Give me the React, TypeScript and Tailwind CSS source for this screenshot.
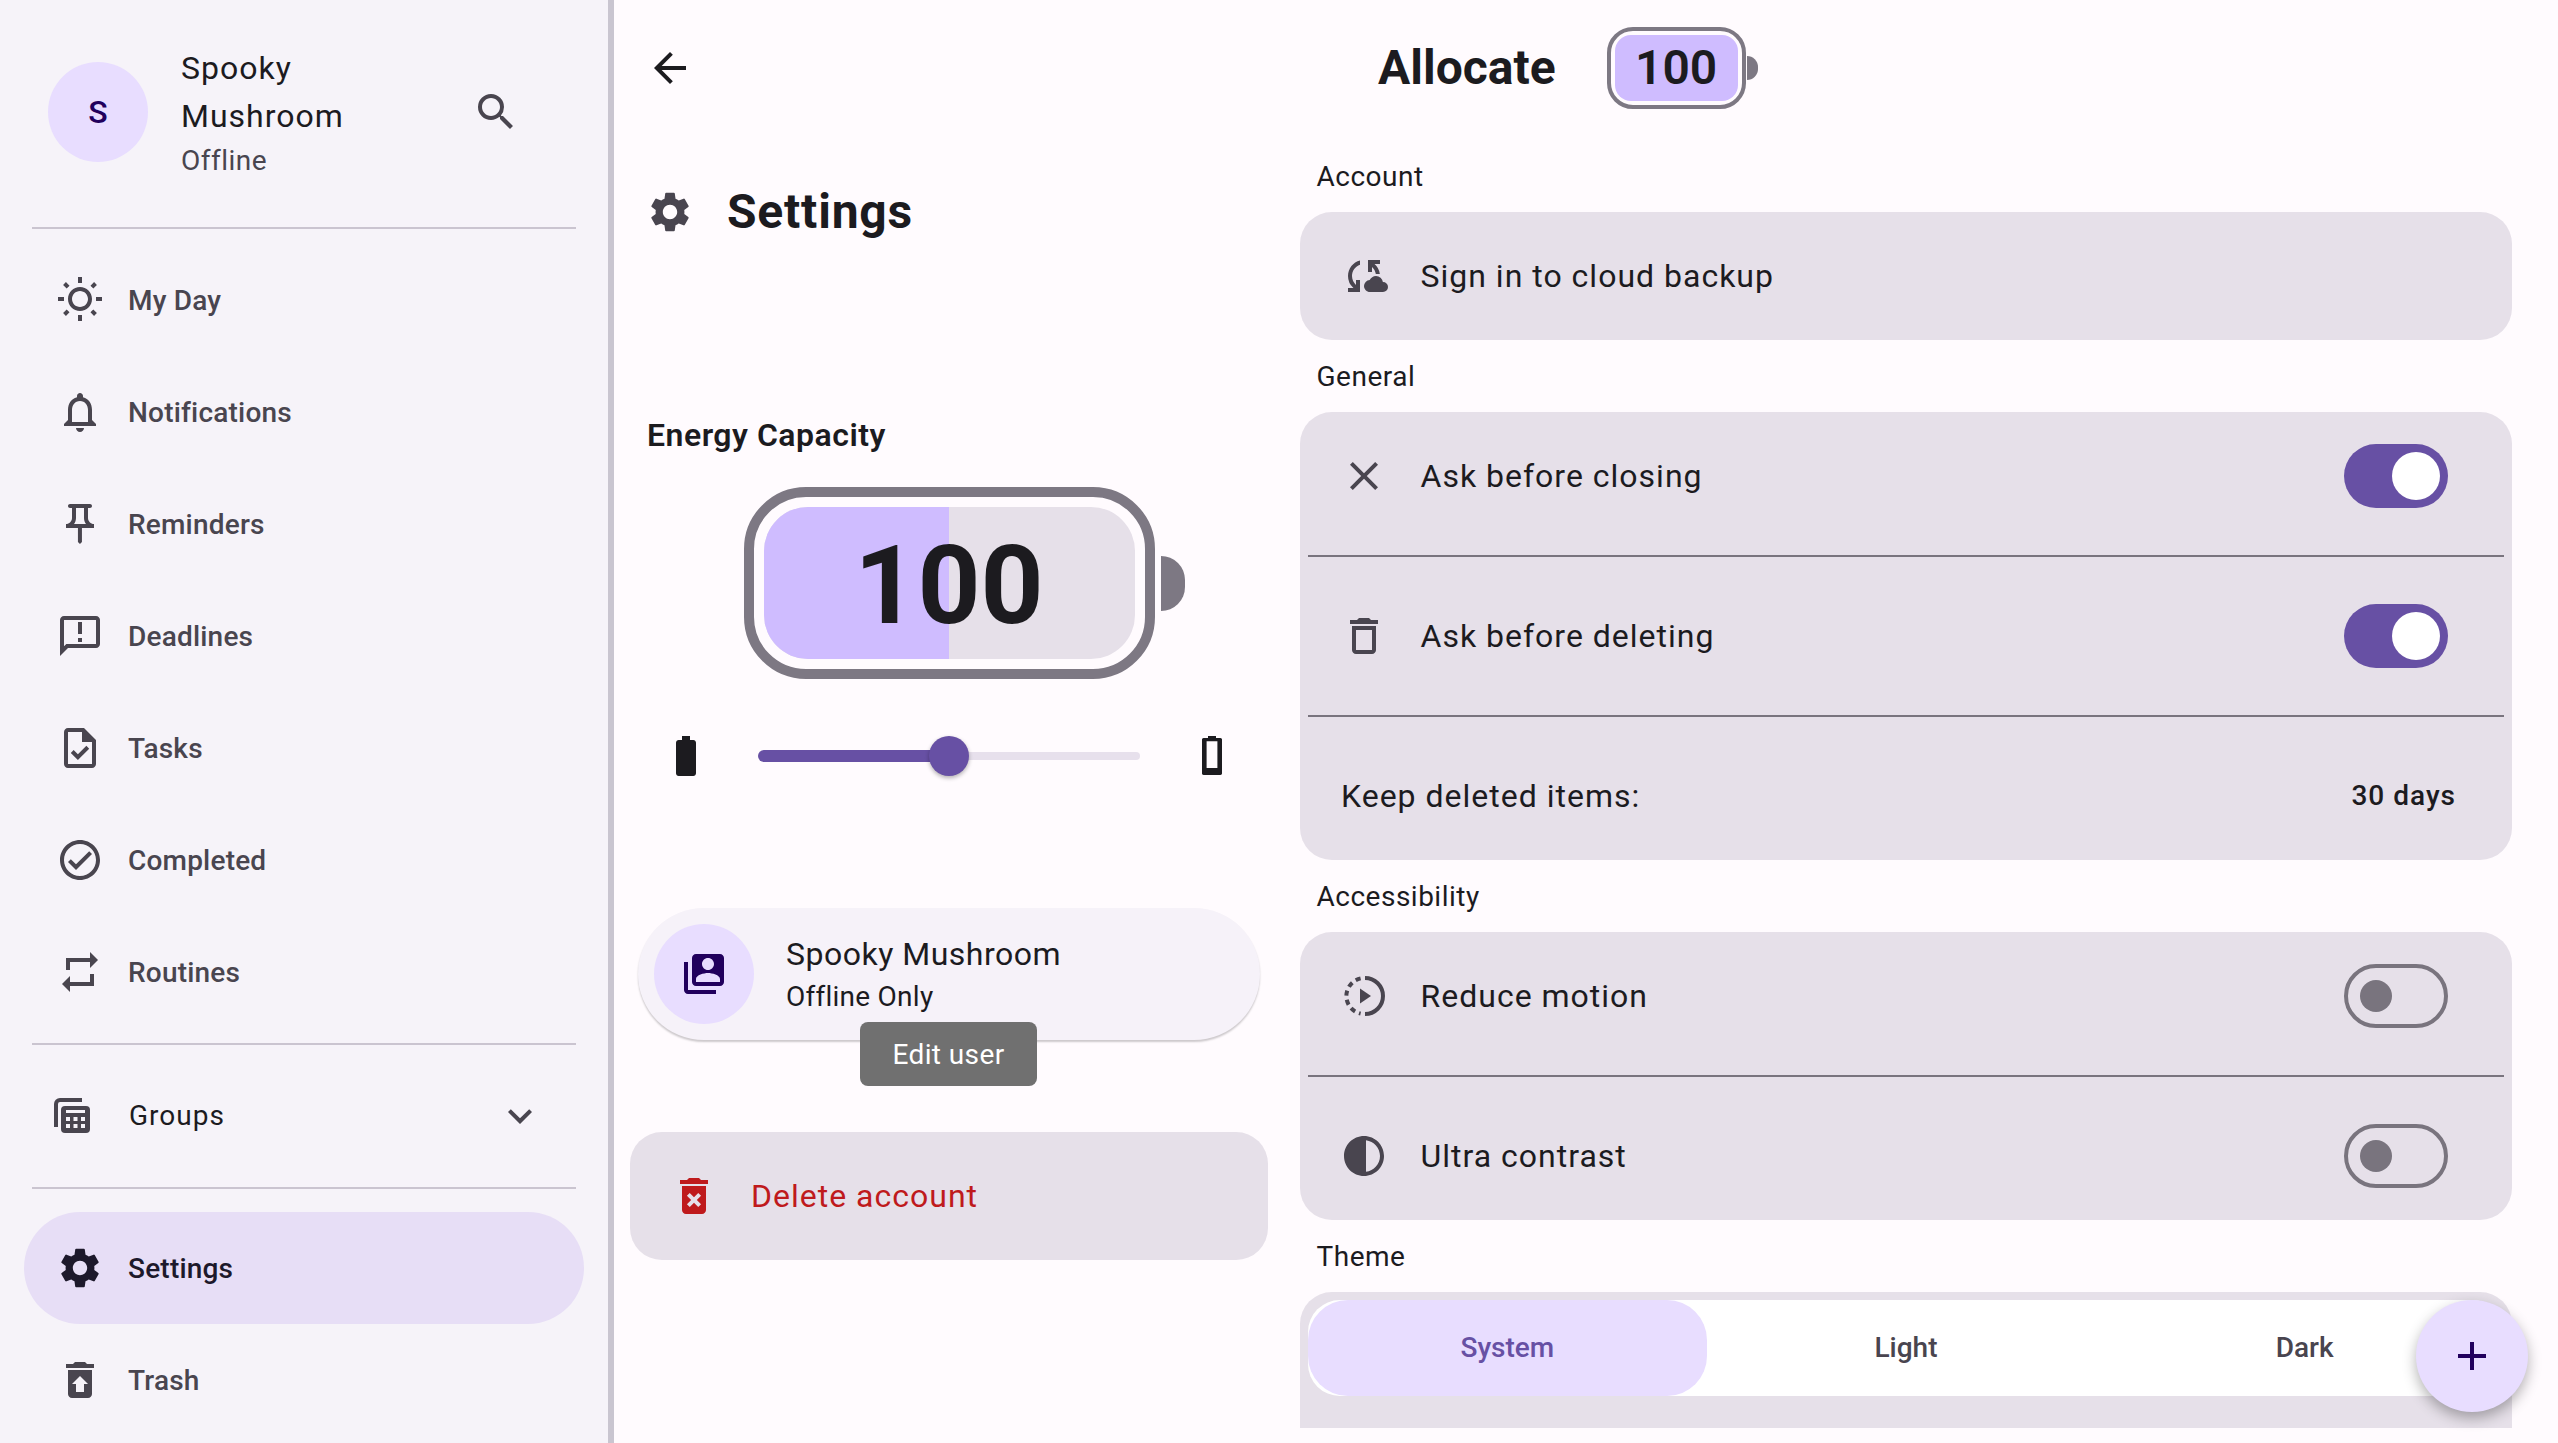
import type { ReactNode } from "react";
import {
  MdAdd,
  MdArrowBack,
  MdBatteryFull,
  MdClose,
  MdCloudSync,
  MdContrast,
  MdDeleteForever,
  MdExpandMore,
  MdOutlineAnnouncement,
  MdOutlineCheckCircle,
  MdOutlineDelete,
  MdOutlineNotifications,
  MdOutlinePushPin,
  MdOutlineTask,
  MdOutlineWbSunny,
  MdRepeat,
  MdRestoreFromTrash,
  MdSearch,
  MdSettings,
  MdSwitchAccount,
} from "react-icons/md";

const navTop = [
  { label: "My Day", icon: <MdOutlineWbSunny size={48} /> },
  { label: "Notifications", icon: <MdOutlineNotifications size={48} /> },
  { label: "Reminders", icon: <MdOutlinePushPin size={48} /> },
  { label: "Deadlines", icon: <MdOutlineAnnouncement size={48} /> },
  { label: "Tasks", icon: <MdOutlineTask size={48} /> },
  { label: "Completed", icon: <MdOutlineCheckCircle size={48} /> },
  { label: "Routines", icon: <MdRepeat size={48} /> },
];

function GroupsIcon() {
  return (
    <svg width="36" height="36" viewBox="0 0 36 36" className="shrink-0">
      <path d="M2 29V6a4 4 0 0 1 4-4h22" fill="none" stroke="#49454f" strokeWidth="4" />
      <rect x="7" y="8" width="29" height="27" rx="4" fill="#49454f" />
      <rect x="12" y="12" width="19" height="3" fill="#f6f3f9" />
      <g fill="#f6f3f9">
        <rect x="12" y="19" width="4" height="4" />
        <rect x="19.5" y="19" width="4" height="4" />
        <rect x="27" y="19" width="4" height="4" />
        <rect x="12" y="26" width="4" height="4" />
        <rect x="19.5" y="26" width="4" height="4" />
        <rect x="27" y="26" width="4" height="4" />
      </g>
    </svg>
  );
}

// dashed circle with a play triangle, solid on the right side
function ReduceMotionIcon() {
  return (
    <svg width="48" height="48" viewBox="0 0 24 24" fill="none" stroke="currentColor" strokeWidth="2">
      <path d="M12.5 3a9 9 0 0 1 0 18" />
      <path d="M10.3 3.2A9 9 0 0 0 10.3 20.8" strokeDasharray="2.6 2.1" />
      <path d="M10 8.2v7.6l5.5-3.8z" fill="currentColor" stroke="none" />
    </svg>
  );
}

function EmptyBatteryIcon() {
  return (
    <svg width="48" height="48" viewBox="0 0 24 24" className="shrink-0">
      <path
        fillRule="evenodd"
        fill="currentColor"
        d="M10 2h4v1h2.2c.5 0 .8.4.8.8v17c0 .4-.3.7-.8.7H7.8c-.5 0-.8-.3-.8-.7v-17c0-.4.3-.8.8-.8H10zM9.3 4.6V18h5.4V4.6z"
      />
    </svg>
  );
}

function NavItem({ label, icon, active }: { label: string; icon: ReactNode; active?: boolean }) {
  return (
    <div
      className={
        "mx-[24px] flex h-[112px] items-center rounded-full pl-[32px] text-[28px] font-medium tracking-[0.2px] " +
        (active ? "bg-[#e7def6] text-[#1d192b]" : "text-[#49454f]")
      }
    >
      <span className="flex w-[72px] shrink-0">{icon}</span>
      <span className="pt-[2px]">{label}</span>
    </div>
  );
}

function Divider() {
  return <div className="mx-[32px] h-[2px] shrink-0 bg-[#cac4d0]" />;
}

function Sidebar() {
  return (
    <aside className="flex h-full w-[614px] shrink-0 flex-col border-r-[6px] border-[#c9c5d0] bg-[#f6f3f9]">
      <div className="flex h-[227px] shrink-0 items-center pb-[3px] pl-[48px]">
        <div className="flex h-[100px] w-[100px] shrink-0 items-center justify-center rounded-full bg-[#e8ddff] text-[32px] font-medium text-[#21005d]">
          S
        </div>
        <div className="ml-[33px] w-[280px]">
          <div className="text-[32px] leading-[48px] tracking-[1px] text-[#1c1b1f]">
            Spooky
            <br />
            Mushroom
          </div>
          <div className="mt-[1px] text-[28px] leading-[40px] tracking-[0.5px] text-[#49454f]">Offline</div>
        </div>
        <MdSearch size={48} className="ml-[11px] text-[#49454f]" />
      </div>
      <Divider />
      <div className="flex flex-col pt-[15px] pb-[15px]">
        {navTop.map((n) => (
          <NavItem key={n.label} label={n.label} icon={n.icon} />
        ))}
      </div>
      <Divider />
      <div className="flex h-[142px] shrink-0 items-center pl-[54px] text-[28px] tracking-[1px] text-[#1c1b1f]">
        <GroupsIcon />
        <span className="ml-[39px]">Groups</span>
        <MdExpandMore size={48} className="ml-auto mr-[64px] text-[#49454f]" />
      </div>
      <Divider />
      <div className="flex flex-col pt-[23px]">
        <NavItem label="Settings" icon={<MdSettings size={48} />} active />
        <NavItem label="Trash" icon={<MdRestoreFromTrash size={48} />} />
      </div>
    </aside>
  );
}

function BigBattery() {
  return (
    <div className="mx-auto flex w-[441px] items-center">
      <div className="h-[192px] w-[411px] shrink-0 rounded-[62px] border-[10px] border-[#7d7883] p-[10px]">
        <div className="relative flex h-full items-center justify-center overflow-hidden rounded-[44px] bg-[#e6e0e9]">
          <div className="absolute inset-y-0 left-0 w-1/2 bg-[#cfbcff]" />
          <span className="relative pt-[5px] text-[110px] font-bold leading-none text-[#1c1b1f]">100</span>
        </div>
      </div>
      <div className="ml-[6px] h-[55px] w-[24px] rounded-r-[24px] bg-[#7d7883]" />
    </div>
  );
}

function SmallBattery() {
  return (
    <div className="flex items-center">
      <div className="h-[82px] w-[139px] rounded-[26px] border-[4px] border-[#7d7883] p-[4px]">
        <div className="flex h-full items-center justify-center rounded-[16px] bg-[#cfbcff] text-[48px] font-semibold leading-none text-[#1c1b1f]">
          100
        </div>
      </div>
      <div className="ml-[1px] h-[24px] w-[11px] rounded-r-[12px] bg-[#7d7883]" />
    </div>
  );
}

function LeftPanel() {
  return (
    <section className="flex w-[670px] shrink-0 flex-col">
      <div className="mt-[44px] flex h-[64px] items-center pl-[32px]">
        <MdSettings size={48} className="text-[#49454f]" />
        <h1 className="ml-[33px] text-[48px] font-bold leading-none tracking-[0.8px] text-[#1c1b1f]">Settings</h1>
      </div>
      <h2 className="mt-[167px] pl-[33px] text-[32px] font-semibold leading-[48px] tracking-[0.5px] text-[#1c1b1f]">
        Energy Capacity
      </h2>
      <div className="mt-[28px] pl-[30px]">
        <BigBattery />
      </div>
      <div className="mt-[53px] flex h-[48px] items-center text-[#1c1b1f]">
        <MdBatteryFull size={48} className="ml-[48px] shrink-0" />
        <div className="relative ml-[48px] h-[40px] w-[382px] shrink-0">
          <div className="absolute left-[190px] right-0 top-[16px] h-[8px] rounded-r-full bg-[#e7e0ec]" />
          <div className="absolute left-0 top-[14px] h-[12px] w-[191px] rounded-l-full bg-[#6750a4]" />
          <div className="absolute left-[171px] top-0 h-[40px] w-[40px] rounded-full bg-[#6750a4] shadow-[0_2px_4px_rgba(0,0,0,0.3)]" />
        </div>
        <span className="ml-[48px]">
          <EmptyBatteryIcon />
        </span>
      </div>
      <div className="relative mx-[24px] mt-[128px] flex h-[132px] items-center rounded-full bg-[#f6f2f9] pl-[16px] shadow-[0_2px_2px_rgba(0,0,0,0.2)]">
        <div className="flex h-[100px] w-[100px] shrink-0 items-center justify-center rounded-full bg-[#e8ddff] text-[#21005d]">
          <MdSwitchAccount size={48} />
        </div>
        <div className="ml-[32px] pb-[2px]">
          <div className="text-[32px] leading-[48px] tracking-[0.5px] text-[#1c1b1f]">Spooky Mushroom</div>
          <div className="text-[28px] leading-[38px] tracking-[0.25px] text-[#1c1b1f]">Offline Only</div>
        </div>
        <div className="absolute left-[222px] top-[114px] flex h-[64px] w-[177px] items-center justify-center rounded-[8px] bg-[#707070] pt-[1px] text-[28px] tracking-[0.4px] text-white">
          Edit user
        </div>
      </div>
      <div className="mx-[16px] mt-[92px] flex h-[128px] items-center rounded-[32px] bg-[#e6e0e9] pl-[40px] text-[32px] tracking-[1px] text-[#bf1a1c]">
        <MdDeleteForever size={48} className="shrink-0" />
        <span className="ml-[33px]">Delete account</span>
      </div>
    </section>
  );
}

function Toggle({ on }: { on?: boolean }) {
  if (on) {
    return (
      <div className="ml-auto mr-[64px] flex h-[64px] w-[104px] shrink-0 items-center justify-end rounded-full bg-[#6750a4] pr-[8px]">
        <div className="h-[48px] w-[48px] rounded-full bg-white" />
      </div>
    );
  }
  return (
    <div className="ml-auto mr-[64px] flex h-[64px] w-[104px] shrink-0 items-center rounded-full border-[4px] border-[#79747e] pl-[12px]">
      <div className="h-[32px] w-[32px] rounded-full bg-[#79747e]" />
    </div>
  );
}

function Row({ icon, label, right }: { icon?: ReactNode; label: string; right?: ReactNode }) {
  return (
    <div className="flex h-[128px] items-center text-[32px] tracking-[1px] text-[#1c1b1f]">
      {icon ? (
        <>
          <span className="ml-[40px] flex w-[48px] shrink-0 justify-center text-[#49454f]">{icon}</span>
          <span className="ml-[32.5px]">{label}</span>
        </>
      ) : (
        <span className="ml-[41px]">{label}</span>
      )}
      {right}
    </div>
  );
}

function RowDivider() {
  return (
    <div className="flex h-[32px] items-center px-[8px]">
      <div className="h-[2px] w-full bg-[#79747e]" />
    </div>
  );
}

function SectionLabel({ children }: { children: ReactNode }) {
  return (
    <div className="h-[72px] pl-[16.5px] pt-[2px] text-[28px] leading-[70px] tracking-[0.5px] text-[#1c1b1f]">
      {children}
    </div>
  );
}

function RightPanel() {
  return (
    <section className="flex flex-1 flex-col overflow-hidden pl-[16px] pr-[46px]">
      <div className="mt-[4px]">
        <SectionLabel>Account</SectionLabel>
      </div>
      <div className="rounded-[32px] bg-[#e6e0e9]">
        <Row icon={<MdCloudSync size={48} />} label="Sign in to cloud backup" />
      </div>
      <SectionLabel>General</SectionLabel>
      <div className="rounded-[32px] bg-[#e6e0e9]">
        <Row icon={<MdClose size={48} />} label="Ask before closing" right={<Toggle on />} />
        <RowDivider />
        <Row icon={<MdOutlineDelete size={48} />} label="Ask before deleting" right={<Toggle on />} />
        <RowDivider />
        <Row
          label="Keep deleted items:"
          right={<span className="ml-auto mr-[56px] text-[28px] font-medium tracking-[1px]">30 days</span>}
        />
      </div>
      <SectionLabel>Accessibility</SectionLabel>
      <div className="rounded-[32px] bg-[#e6e0e9]">
        <Row icon={<ReduceMotionIcon />} label="Reduce motion" right={<Toggle />} />
        <RowDivider />
        <Row icon={<MdContrast size={48} />} label="Ultra contrast" right={<Toggle />} />
      </div>
      <SectionLabel>Theme</SectionLabel>
      <div className="h-[136px] shrink-0 rounded-t-[32px] bg-[#e6e0e9] pl-[8px] pr-[8px] pt-[8px]">
        <div className="grid h-[96px] grid-cols-3 rounded-[32px] bg-white text-[28px] font-medium text-[#49454f]">
          <div className="flex items-center justify-center rounded-[40px] bg-[#e8ddff] text-[#6750a4]">System</div>
          <div className="flex items-center justify-center">Light</div>
          <div className="flex items-center justify-center">Dark</div>
        </div>
      </div>
    </section>
  );
}

export default function App() {
  return (
    <div className="relative flex h-[1443px] w-full overflow-hidden bg-[#fffbfe] font-['Roboto',sans-serif]">
      <Sidebar />
      <main className="flex h-[1428px] min-w-0 flex-1 flex-col">
        <header className="relative flex h-[136px] shrink-0 items-center">
          <MdArrowBack size={48} className="ml-[32px] shrink-0 text-[#1c1b1f]" />
          <div className="absolute left-[764px] flex items-center">
            <span className="text-[48px] font-bold text-[#1c1b1f]">Allocate</span>
            <div className="ml-[51px]">
              <SmallBattery />
            </div>
          </div>
        </header>
        <div className="flex min-h-0 flex-1">
          <LeftPanel />
          <RightPanel />
        </div>
      </main>
      <button className="absolute left-[2416px] top-[1300px] flex h-[112px] w-[112px] items-center justify-center rounded-full bg-[#e8ddff] text-[#21005d] shadow-[0_6px_14px_rgba(0,0,0,0.3)]">
        <MdAdd size={48} />
      </button>
    </div>
  );
}
